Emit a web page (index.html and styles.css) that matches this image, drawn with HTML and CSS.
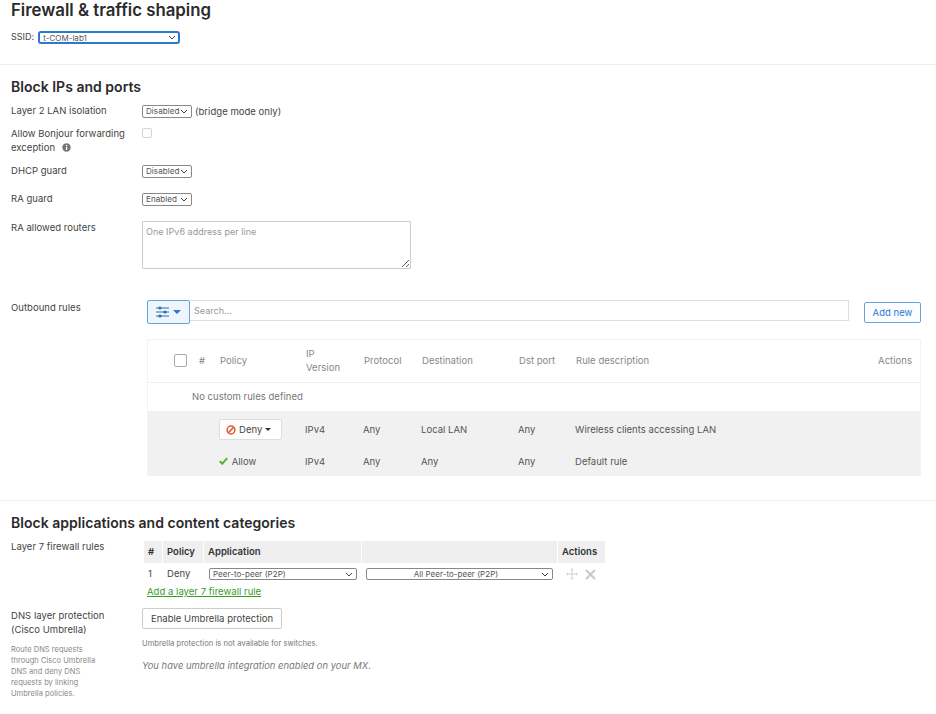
FILE: index.html
```
<!DOCTYPE html>
<html lang="en">
<head>
<meta charset="utf-8">
<title>Firewall &amp; traffic shaping</title>
<link rel="stylesheet" href="styles.css">
</head>
<body>
<header class="top">
  <h1>Firewall &amp; traffic shaping</h1>
  <div class="ssid">
    <label>SSID:</label>
    <span class="sw sw-ssid"><select class="sel"><option>t-COM-lab1</option></select><svg class="chev" width="8" height="5" viewBox="0 0 8 5" fill="none"><path d="M1 1l3 3 3-3" stroke="#444"/></svg></span>
  </div>
</header>

<section class="sec sec-ports">
  <h2>Block IPs and ports</h2>
  <div class="row row-l2">
    <div class="lbl">Layer 2 LAN isolation</div>
    <div class="val"><span class="sw sw-sm"><select class="sel"><option>Disabled</option></select><svg class="chev" width="8" height="5" viewBox="0 0 8 5" fill="none"><path d="M1 1l3 3 3-3" stroke="#444"/></svg></span> <span>(bridge mode only)</span></div>
  </div>
  <div class="row row-bonjour">
    <div class="lbl">Allow Bonjour forwarding exception
      <svg class="info" width="9" height="9" viewBox="0 0 9 9"><circle cx="4.5" cy="4.5" r="4.2" fill="#777"/><rect x="3.9" y="3.8" width="1.3" height="3.2" fill="#fff"/><rect x="3.9" y="1.9" width="1.3" height="1.2" fill="#fff"/></svg>
    </div>
    <div class="val"><span class="check"></span></div>
  </div>
  <div class="row row-dhcp">
    <div class="lbl">DHCP guard</div>
    <div class="val"><span class="sw sw-sm"><select class="sel"><option>Disabled</option></select><svg class="chev" width="8" height="5" viewBox="0 0 8 5" fill="none"><path d="M1 1l3 3 3-3" stroke="#444"/></svg></span></div>
  </div>
  <div class="row row-ra">
    <div class="lbl">RA guard</div>
    <div class="val"><span class="sw sw-sm"><select class="sel"><option>Enabled</option></select><svg class="chev" width="8" height="5" viewBox="0 0 8 5" fill="none"><path d="M1 1l3 3 3-3" stroke="#444"/></svg></span></div>
  </div>
  <div class="row row-routers">
    <div class="lbl">RA allowed routers</div>
    <div class="val"><textarea class="ta" placeholder="One IPv6 address per line"></textarea></div>
  </div>
  <div class="row row-out">
    <div class="lbl lbl-out">Outbound rules</div>
    <div class="rules">
      <div class="bar">
        <button class="filter">
          <svg width="13" height="12" viewBox="0 0 13 12" fill="none"><path d="M0 2h13M0 6h13M0 10h13" stroke="#2a6fb5" stroke-width="1"/><circle cx="4" cy="2" r="1.6" fill="#2a6fb5"/><circle cx="9" cy="6" r="1.6" fill="#2a6fb5"/><circle cx="4" cy="10" r="1.6" fill="#2a6fb5"/></svg>
          <span class="caret caret-blue"></span>
        </button>
        <input class="search" placeholder="Search...">
        <button class="add">Add new</button>
      </div>
      <div class="tbl-card">
        <table class="rules-t">
          <colgroup><col class="c1"><col class="c2"><col class="c3"><col class="c4"><col class="c5"><col class="c6"><col class="c7"><col><col class="c9"></colgroup>
          <thead>
            <tr><th class="th-check"><span class="check check-lg"></span></th><th>#</th><th>Policy</th><th>IP<br>Version</th><th>Protocol</th><th>Destination</th><th>Dst port</th><th>Rule description</th><th class="th-act">Actions</th></tr>
          </thead>
          <tbody>
            <tr class="empty"><td colspan="9">No custom rules defined</td></tr>
            <tr class="gray gray-1">
              <td colspan="2"></td>
              <td><button class="deny">
                <svg width="10" height="10" viewBox="0 0 10 10" fill="none"><circle cx="5" cy="5" r="3.9" stroke="#e0583a" stroke-width="1.5"/><path d="M2.4 7.6 7.6 2.4" stroke="#e0583a" stroke-width="1.5"/></svg>
                Deny <span class="caret"></span></button></td>
              <td>IPv4</td><td>Any</td><td>Local LAN</td><td>Any</td><td colspan="2">Wireless clients accessing LAN</td>
            </tr>
            <tr class="gray gray-2">
              <td colspan="2"></td>
              <td class="allow">
                <svg width="9" height="8" viewBox="0 0 9 8" fill="none"><path d="M.8 4.2 3.3 6.7 8.2 1.2" stroke="#5cb030" stroke-width="2"/></svg>
                Allow</td>
              <td>IPv4</td><td>Any</td><td>Any</td><td>Any</td><td colspan="2">Default rule</td>
            </tr>
          </tbody>
        </table>
      </div>
    </div>
  </div>
</section>

<section class="sec sec-apps">
  <h2>Block applications and content categories</h2>
  <div class="row row-l7">
    <div class="lbl">Layer 7 firewall rules</div>
    <div class="l7">
      <table class="l7-t">
        <colgroup><col class="l1"><col class="l2"><col class="l3"><col class="l4"><col class="l5"></colgroup>
        <thead><tr><th>#</th><th>Policy</th><th>Application</th><th></th><th>Actions</th></tr></thead>
        <tbody><tr>
          <td>1</td><td>Deny</td>
          <td><span class="sw sw-app"><select class="sel"><option>Peer-to-peer (P2P)</option></select><svg class="chev" width="8" height="5" viewBox="0 0 8 5" fill="none"><path d="M1 1l3 3 3-3" stroke="#444"/></svg></span></td>
          <td><span class="sw sw-app2"><select class="sel"><option>All Peer-to-peer (P2P)</option></select><svg class="chev" width="8" height="5" viewBox="0 0 8 5" fill="none"><path d="M1 1l3 3 3-3" stroke="#444"/></svg></span></td>
          <td class="l7-act">
            <svg width="12" height="12" viewBox="0 0 12 12" fill="none"><path d="M6 1v10M1 6h10" stroke="#d0d0d0" stroke-width="1"/><path d="M6 0 7.600 2H4.400zM6 12 7.600 10H4.400zM0 6 2 4.400V7.600zM12 6 10 4.400V7.600z" fill="#d0d0d0"/></svg>
            <svg width="11" height="11" viewBox="0 0 11 11" fill="none"><path d="M1 1l9 9M10 1l-9 9" stroke="#c8c8c8" stroke-width="2"/></svg>
          </td>
        </tr></tbody>
      </table>
      <a class="add-link" href="#">Add a layer 7 firewall rule</a>
    </div>
  </div>
  <div class="row row-dns">
    <div class="lbl">
      DNS layer protection (Cisco Umbrella)
      <p class="hint">Route DNS requests through Cisco Umbrella DNS and deny DNS requests by linking Umbrella policies.</p>
    </div>
    <div class="val-col">
      <button class="umb">Enable Umbrella protection</button>
      <p class="note">Umbrella protection is not available for switches.</p>
      <p class="mx">You have umbrella integration enabled on your MX.</p>
    </div>
  </div>
</section>
</body>
</html>
```
FILE: styles.css
```
* { box-sizing: border-box; }
html, body { margin: 0; padding: 0; }
body {
  width: 936px;
  height: 714px;
  overflow: hidden;
  background: #fff;
  font-family: Inter, "Liberation Sans", sans-serif;
  font-size: 9.5px;
  line-height: 14px;
  letter-spacing: .03px;
  color: #444;
}
h1, h2, p { margin: 0; }
button, input, select, textarea { font-family: inherit; margin: 0; letter-spacing: inherit; }

.top { height: 65px; padding: 0 11px; border-bottom: 1px solid #eee; }
h1 { font-size: 16.800px; line-height: 20px; font-weight: 600; letter-spacing: 0; color: #2a2a2a; }
.ssid { display: flex; align-items: center; gap: 4px; margin-top: 10px; font-size: 9px; }

.sw { position: relative; display: block; flex: none; }
.chev { position: absolute; top: 50%; right: 4px; margin-top: -2.500px; pointer-events: none; }
.sel {
  display: block;
  width: 100%;
  height: 100%;
  padding: 0 10px 0 3px;
  appearance: none;
  font-size: 8px;
  line-height: 11px;
  color: #555;
  background: #fff;
  border: 1px solid #888;
  border-radius: 2px;
  outline: none;
}
.sw-ssid { width: 142px; height: 13px; }
.sw-ssid .sel { border: 2px solid #2a78d6; border-radius: 3px; }
.sw-sm { width: 50px; height: 13px; }
.sw-sm .sel { font-size: 8.100px; padding-left: 3px; }
.sw-app { width: 148px; height: 12px; margin-left: 1px; }
.sw-app2 { width: 187px; height: 12px; }
.sw-app2 .sel { text-align: center; }

.sec { padding: 0 15px 0 11px; }
.sec-ports { height: 436px; padding-top: 13px; border-bottom: 1px solid #eee; }
.sec-apps { padding-top: 13px; }
h2 { font-size: 14px; line-height: 17px; font-weight: 600; letter-spacing: .02px; color: #2a2a2a; }

.row { display: flex; }
.lbl { width: 131px; flex: none; padding-right: 4px; }
.val { display: flex; align-items: flex-start; gap: 3px; padding-top: 1px; }
.row-l2 { margin-top: 9px; height: 23px; }
.row-l2 .val { align-items: center; height: 13px; margin-top: 1px; padding: 0; }
.row-bonjour { height: 37px; }
.row-dhcp { height: 28px; }
.row-ra { height: 28px; }
.row-routers { height: 79px; margin-top: 1px; }
.row-routers .val { padding-top: 0; }
.info { vertical-align: -1px; margin-left: 4px; }
.check {
  display: block;
  width: 10px;
  height: 10px;
  border: 1px solid #d5d5d5;
  border-radius: 2px;
  background: #fff;
}
.check-lg { width: 13px; height: 13px; border-color: #aaa; }
.ta {
  display: block;
  width: 269px;
  height: 48px;
  padding: 4px 3px;
  font-size: 9px;
  line-height: 12px;
  color: #555;
  border: 1px solid #ccc;
  border-radius: 1px;
  outline: none;
}
.ta::placeholder, .search::placeholder { color: #999; opacity: 1; }

.lbl-out { padding-top: 1px; width: 136px; }
.rules { width: 774px; flex: none; }
.bar { display: flex; align-items: flex-start; height: 39px; }
.filter {
  width: 43px;
  height: 24px;
  display: flex;
  align-items: center;
  justify-content: center;
  gap: 4px;
  padding: 0;
  background: #eef5fd;
  border: 1px solid #6aa2dd;
  border-radius: 2px;
}
.caret { display: inline-block; width: 0; height: 0; border: 3px solid transparent; border-top: 3px solid #333; border-bottom: 0; vertical-align: 2px; }
.caret-blue { border-width: 4px 4px 0; border-top-color: #2a78d6; }
.search {
  width: 659px;
  height: 21px;
  padding: 0 4px;
  font-size: 9px;
  border: 1px solid #ddd;
  border-left: 0;
  outline: none;
}
.add {
  width: 57px;
  height: 21px;
  margin: 2px 0 0 15px;
  padding: 0;
  font-size: 9.500px;
  color: #2a78d6;
  background: #fbfdff;
  border: 1px solid #6aa2dd;
  border-radius: 2px;
}

.tbl-card { border: 1px solid #f2f2f2; border-bottom: 0; }
.rules-t, .l7-t { border-collapse: collapse; table-layout: fixed; }
.rules-t { width: 772px; }
.c1 { width: 51px; } .c2 { width: 21px; } .c3 { width: 86px; } .c4 { width: 58px; }
.c5 { width: 58px; } .c6 { width: 97px; } .c7 { width: 57px; } .c9 { width: 80px; }
.rules-t th {
  height: 42px;
  padding: 0;
  font-weight: 400;
  text-align: left;
  color: #888;
  border-bottom: 1px solid #f0f0f0;
}
.rules-t .th-check { padding-left: 26px; }
.rules-t .th-act { text-align: right; padding-right: 8px; }
.rules-t td { padding: 0; color: #555; }
.empty td { height: 29px; padding-left: 44px !important; color: #777 !important; }
.gray td { background: #f1f1f1; text-indent: -1px; }
.gray-1 td { height: 39px; padding-bottom: 2px; }
.gray-2 td { height: 26px; padding-bottom: 3px; }
.deny {
  width: 63px;
  height: 21px;
  padding: 0 0 0 6px;
  margin-left: -1px;
  display: flex;
  align-items: center;
  gap: 3px;
  font-size: 9.500px;
  color: #444;
  background: #fff;
  border: 1px solid #ddd;
  border-radius: 2px;
}
.allow svg { margin: 0 1px 0 0; }

.row-l7 { margin-top: 9px; height: 68px; }
.l7 { margin-left: 2px; padding-top: 1px; margin-top: 0; }
.l7-t { width: 462px; border-collapse: separate; border-spacing: 0; }
.l1 { width: 19px; } .l2 { width: 41px; } .l3 { width: 158px; } .l4 { width: 196px; } .l5 { width: 48px; }
.l7-t th {
  height: 22px;
  padding: 0 0 0 4px;
  font-size: 9.500px;
  font-weight: 600;
  text-align: left;
  color: #333;
  background: #efefef;
  border-right: 1px solid #fff;
}
.l7-t td { height: 22px; padding: 0 0 0 4px; color: #444; }
.l7-act { display: flex; align-items: center; gap: 7px; padding-left: 8px !important; }
.add-link { display: block; margin: 0 0 0 3px; font-size: 9.500px; color: #3a9a2c; text-decoration: underline; }

.row-dns { margin-top: -1px; }
.row-dns .lbl { padding-top: 2px; padding-right: 20px; }
.hint { margin-top: 7px; padding-right: 12px; font-size: 7.500px; line-height: 11px; color: #888; }
.val-col { padding-top: 1px; }
.umb {
  display: block;
  width: 140px;
  height: 21px;
  padding: 0;
  font-size: 9.500px;
  color: #444;
  background: #fff;
  border: 1px solid #ccc;
  border-radius: 2px;
}
.note { margin-top: 8px; font-size: 7.600px; line-height: 14px; color: #777; }
.mx { margin-top: 8px; font-size: 9.400px; line-height: 14px; font-style: italic; color: #777; }
```
